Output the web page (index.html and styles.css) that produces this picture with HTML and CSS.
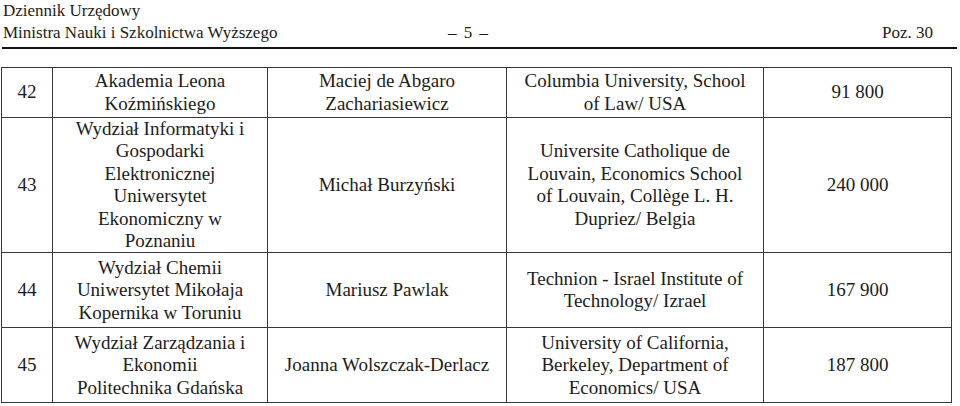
FILE: index.html
```html
<!DOCTYPE html>
<html lang="pl">
<head>
<meta charset="utf-8">
<title>Dziennik Urzędowy</title>
<link rel="stylesheet" href="styles.css">
</head>
<body>
<div class="page">
  <header class="masthead">
    <div class="title">Dziennik Urzędowy</div>
    <div class="subline">
      <span class="ministry">Ministra Nauki i Szkolnictwa Wyższego</span>
      <span class="pageno">– 5 –</span>
      <span class="poz">Poz. 30</span>
    </div>
  </header>
  <div class="rule"></div>
  <table class="grid">
    <colgroup>
      <col class="c-no"><col class="c-unit"><col class="c-name"><col class="c-host"><col class="c-amt">
    </colgroup>
    <tr class="r42">
      <td>42</td>
      <td>Akademia Leona<br>Koźmińskiego</td>
      <td>Maciej de Abgaro<br>Zachariasiewicz</td>
      <td>Columbia University, School<br>of Law/ USA</td>
      <td>91 800</td>
    </tr>
    <tr class="r43">
      <td>43</td>
      <td>Wydział Informatyki i<br>Gospodarki<br>Elektronicznej<br>Uniwersytet<br>Ekonomiczny w<br>Poznaniu</td>
      <td>Michał Burzyński</td>
      <td>Universite Catholique de<br>Louvain, Economics School<br>of Louvain, Collège L. H.<br>Dupriez/ Belgia</td>
      <td>240 000</td>
    </tr>
    <tr class="r44">
      <td>44</td>
      <td>Wydział Chemii<br>Uniwersytet Mikołaja<br>Kopernika w Toruniu</td>
      <td>Mariusz Pawlak</td>
      <td>Technion - Israel Institute of<br>Technology/ Izrael</td>
      <td>167 900</td>
    </tr>
    <tr class="r45">
      <td>45</td>
      <td>Wydział Zarządzania i<br>Ekonomii<br>Politechnika Gdańska</td>
      <td>Joanna Wolszczak-Derlacz</td>
      <td>University of California,<br>Berkeley, Department of<br>Economics/ USA</td>
      <td>187 800</td>
    </tr>
  </table>
</div>
</body>
</html>
```

FILE: styles.css
```css
html, body {
  margin: 0;
  padding: 0;
  background: #ffffff;
}

.page {
  width: 960px;
  font-family: "Liberation Serif", "Times New Roman", serif;
  color: #1c1c1c;
}

.masthead {
  padding: 0 0 0 3px;
  font-size: 17px;
  line-height: 22px;
}

.subline {
  display: grid;
  grid-template-columns: 445px auto 1fr;
  padding-right: 27px;
}

.pageno {
  white-space: pre;
  word-spacing: 3px;
}

.poz {
  justify-self: end;
}

.rule {
  height: 2px;
  margin: 3px 3px 0 2px;
  background: #141414;
}

.grid {
  margin: 18px 0 0 1px;
  width: 950px;
  table-layout: fixed;
  border-collapse: collapse;
  font-size: 19px;
  line-height: 22.4px;
}

.c-no { width: 51px; }
.c-unit { width: 215px; }
.c-name { width: 239px; }
.c-host { width: 257px; }
.c-amt { width: 188px; }

.grid td {
  border: 1px solid #383838;
  text-align: center;
  vertical-align: middle;
  padding: 0 2px;
  white-space: nowrap;
}

.r42 { height: 50px; }
.r43 { height: 135px; }
.r44 { height: 75px; }
.r45 { height: 75px; }
```
